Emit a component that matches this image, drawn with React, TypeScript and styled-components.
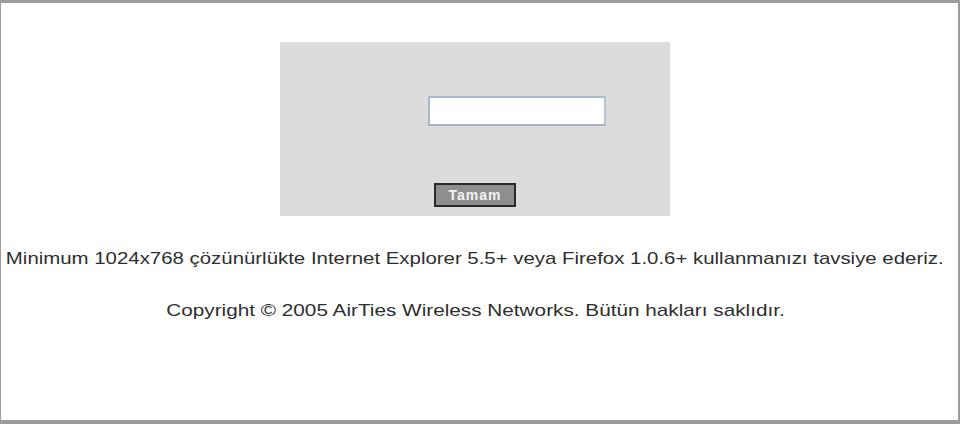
import styled, { createGlobalStyle } from "styled-components";

const Global = createGlobalStyle`
  html, body {
    margin: 0;
    padding: 0;
    background: #ffffff;
  }
`;

const Frame = styled.div`
  box-sizing: border-box;
  width: 960px;
  height: 424px;
  border-style: solid;
  border-color: #9c9c9c;
  border-width: 3px 2px 4px 1px;
  background: #ffffff;
  display: flex;
  flex-direction: column;
  align-items: center;
  padding: 39px 9px 0 0;
  font-family: "Liberation Sans", Arial, sans-serif;
`;

const LoginPanel = styled.form`
  box-sizing: border-box;
  width: 390px;
  height: 174px;
  background: #dcdcdc;
  display: flex;
  flex-direction: column;
  padding-top: 54px;
  margin: 0;
`;

const InputRow = styled.div`
  padding-left: 148px;
  display: flex;
`;

const PasswordInput = styled.input`
  box-sizing: border-box;
  width: 178px;
  height: 30px;
  border: 2px solid #a9b8cb;
  border-right-color: #b9c5d4;
  border-bottom-color: #a4b3c7;
  background: #ffffff;
  outline: none;
  margin: 0;
  padding: 0 4px;
`;

const ButtonRow = styled.div`
  display: flex;
  justify-content: center;
  padding-top: 57px;
`;

const SubmitButton = styled.button`
  box-sizing: border-box;
  width: 82px;
  height: 24px;
  border: 2px solid #2a2a2a;
  background: #8e8e8e;
  color: #f4f4f4;
  font-family: "Liberation Sans", Arial, sans-serif;
  font-weight: bold;
  font-size: 14px;
  letter-spacing: 1px;
  padding: 0;
  margin: 0;
`;

/* the captured page is stretched sideways, so the text is widened to match */
const Note = styled.p<{ $top: number; $stretch: number }>`
  margin: ${(p) => p.$top}px 0 0;
  font-size: 17px;
  line-height: 20px;
  color: #2e2e2e;
  white-space: nowrap;
  transform: scaleX(${(p) => p.$stretch});
`;

export default function App() {
  return (
    <>
      <Global />
      <Frame>
        <LoginPanel onSubmit={(e) => e.preventDefault()}>
          <InputRow>
            <PasswordInput type="password" />
          </InputRow>
          <ButtonRow>
            <SubmitButton type="submit">Tamam</SubmitButton>
          </ButtonRow>
        </LoginPanel>
        <Note $top={33} $stretch={1.2}>
          Minimum 1024x768 çözünürlükte Internet Explorer 5.5+ veya Firefox 1.0.6+ kullanmanızı tavsiye ederiz.
        </Note>
        <Note $top={32} $stretch={1.22}>
          Copyright © 2005 AirTies Wireless Networks. Bütün hakları saklıdır.
        </Note>
      </Frame>
    </>
  );
}
